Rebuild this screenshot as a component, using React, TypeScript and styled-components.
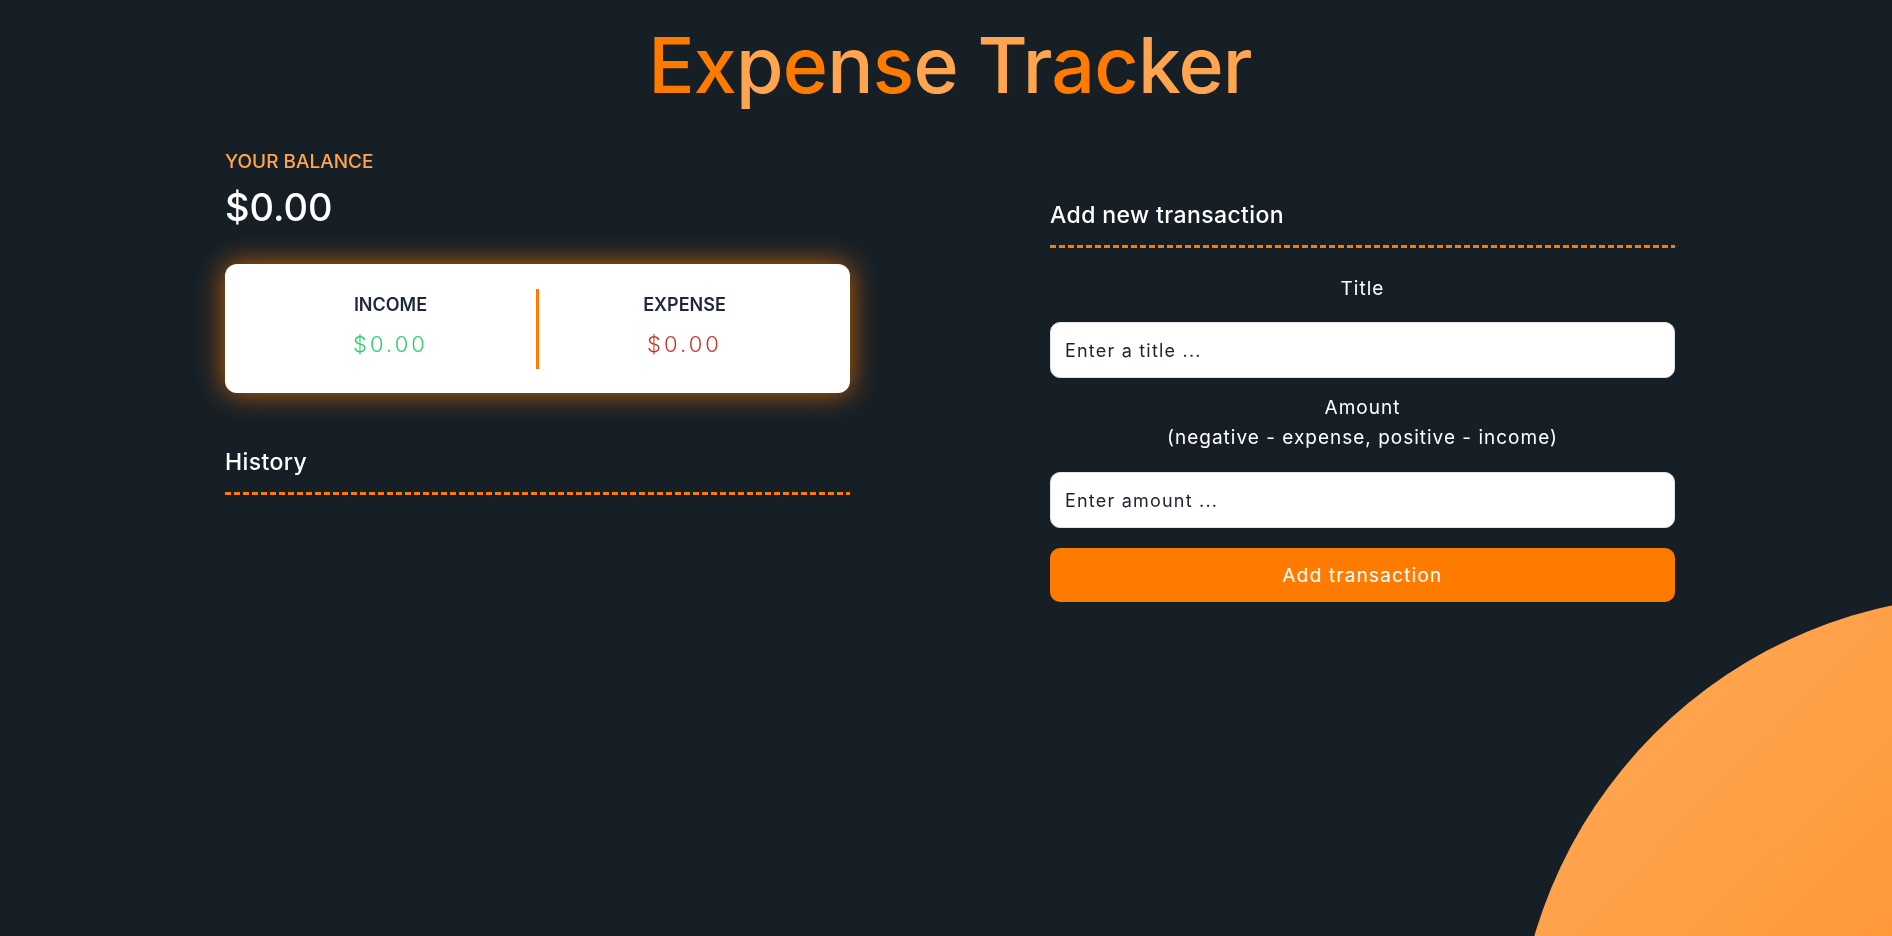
import React from "react";
import styled, { createGlobalStyle } from "styled-components";

const GlobalStyle = createGlobalStyle`
  * { box-sizing: border-box; }
  html, body { margin: 0; padding: 0; }
  body {
    background: #161f26;
    font-family: Inter, "Noto Sans", "Liberation Sans", sans-serif;
    color: #ffffff;
    overflow: hidden;
    min-height: 100vh;
  }
`;

const Page = styled.div`
  position: relative;
  min-height: 936px;
  padding: 27px 0 0 8px;
`;

const Blob = styled.div`
  position: fixed;
  top: 595px;
  right: -573px;
  width: 950px;
  height: 950px;
  border-radius: 50%;
  background: linear-gradient(135deg, #ffab5a 0%, #ff9a3c 35%, #ff7b00 100%);
  z-index: 0;
  pointer-events: none;
`;

const Heading = styled.h1`
  margin: 0;
  text-align: center;
  font-size: 77px;
  line-height: 77px;
  font-weight: 500;
  letter-spacing: -0.8px;
`;

const Letter = styled.span<{ $light?: boolean }>`
  color: ${(p) => (p.$light ? "#ffa44f" : "#ff7b00")};
`;

const Columns = styled.main`
  position: relative;
  z-index: 1;
  display: grid;
  grid-template-columns: 625px 625px;
  column-gap: 200px;
  justify-content: center;
  align-items: start;
  margin-top: 46px;
`;

const Column = styled.section<{ $offset?: number }>`
  display: flex;
  flex-direction: column;
  padding-top: ${(p) => p.$offset ?? 0}px;
`;

const BalanceLabel = styled.h4`
  margin: 0;
  font-size: 19px;
  line-height: 24px;
  font-weight: 500;
  color: #ffa44f;
  text-transform: uppercase;
`;

const BalanceValue = styled.div`
  margin-top: 10px;
  font-size: 38px;
  line-height: 46px;
  font-weight: 500;
  color: #ffffff;
`;

const Card = styled.div`
  margin-top: 34px;
  height: 129px;
  display: flex;
  align-items: center;
  padding: 0 20px 6px;
  background: #ffffff;
  border-radius: 12px;
  box-shadow: 0 0 28px rgba(255, 123, 0, 0.75);
`;

const Half = styled.div`
  flex: 1;
  display: flex;
  flex-direction: column;
  align-items: center;
`;

const HalfLabel = styled.h4`
  margin: 0;
  font-size: 18px;
  line-height: 24px;
  font-weight: 600;
  color: #1e2640;
  text-transform: uppercase;
`;

const Money = styled.p<{ $tone: "plus" | "minus" }>`
  margin: 12px 0 0;
  font-size: 22px;
  line-height: 30px;
  font-weight: 300;
  letter-spacing: 3px;
  color: ${(p) => (p.$tone === "plus" ? "#2ecc71" : "#c0392b")};
`;

const Divider = styled.div`
  align-self: center;
  width: 3px;
  height: 80px;
  margin-top: 6px;
  background: #ff7b00;
`;

const SectionTitle = styled.h3<{ $top?: number }>`
  margin: ${(p) => p.$top ?? 0}px 0 0;
  font-size: 23px;
  line-height: 30px;
  font-weight: 500;
  letter-spacing: 0.4px;
  color: #ffffff;
  padding-bottom: 18px;
  background-image: repeating-linear-gradient(
    90deg,
    #ff7b00 0,
    #ff7b00 6px,
    transparent 6px,
    transparent 9px
  );
  background-size: 100% 3px;
  background-position: left bottom;
  background-repeat: no-repeat;
`;

const Form = styled.form`
  display: flex;
  flex-direction: column;
`;

const Label = styled.label<{ $top: number }>`
  margin-top: ${(p) => p.$top}px;
  text-align: center;
  font-size: 19px;
  line-height: 30px;
  font-weight: 400;
  letter-spacing: 1px;
  color: #ffffff;
`;

const Input = styled.input<{ $top: number }>`
  margin-top: ${(p) => p.$top}px;
  height: 56px;
  width: 100%;
  border: 1px solid #dfe3e8;
  border-radius: 10px;
  background: #ffffff;
  padding: 0 14px;
  font-family: inherit;
  font-size: 18px;
  letter-spacing: 1.2px;
  color: #1b2230;
  outline: none;
  &::placeholder {
    color: #1b2230;
    opacity: 1;
  }
`;

const Button = styled.button`
  margin-top: 20px;
  height: 54px;
  width: 100%;
  border: none;
  border-radius: 10px;
  background: #ff7b00;
  color: #ffffff;
  font-family: inherit;
  font-size: 19px;
  font-weight: 400;
  letter-spacing: 1.2px;
  cursor: pointer;
`;

const titleLetters: Array<[string, boolean]> = [
  ["E", false],
  ["x", false],
  ["p", true],
  ["e", false],
  ["n", true],
  ["s", false],
  ["e", true],
  [" ", true],
  ["T", true],
  ["r", true],
  ["a", false],
  ["c", false],
  ["k", true],
  ["e", true],
  ["r", true],
];

export default function App() {
  return (
    <>
      <GlobalStyle />
      <Page>
        <Blob />
        <Heading>
          {titleLetters.map(([ch, light], i) => (
            <Letter key={i} $light={light}>
              {ch}
            </Letter>
          ))}
        </Heading>
        <Columns>
          <Column>
            <BalanceLabel>Your Balance</BalanceLabel>
            <BalanceValue>$0.00</BalanceValue>
            <Card>
              <Half>
                <HalfLabel>Income</HalfLabel>
                <Money $tone="plus">$0.00</Money>
              </Half>
              <Divider />
              <Half>
                <HalfLabel>Expense</HalfLabel>
                <Money $tone="minus">$0.00</Money>
              </Half>
            </Card>
            <SectionTitle $top={54}>History</SectionTitle>
          </Column>
          <Column $offset={50}>
            <SectionTitle>Add new transaction</SectionTitle>
            <Form onSubmit={(e) => e.preventDefault()}>
              <Label $top={26} htmlFor="title">
                Title
              </Label>
              <Input $top={18} id="title" type="text" placeholder="Enter a title ..." />
              <Label $top={15} htmlFor="amount">
                Amount
                <br />
                (negative - expense, positive - income)
              </Label>
              <Input $top={19} id="amount" type="text" placeholder="Enter amount ..." />
              <Button type="submit">Add transaction</Button>
            </Form>
          </Column>
        </Columns>
      </Page>
    </>
  );
}
